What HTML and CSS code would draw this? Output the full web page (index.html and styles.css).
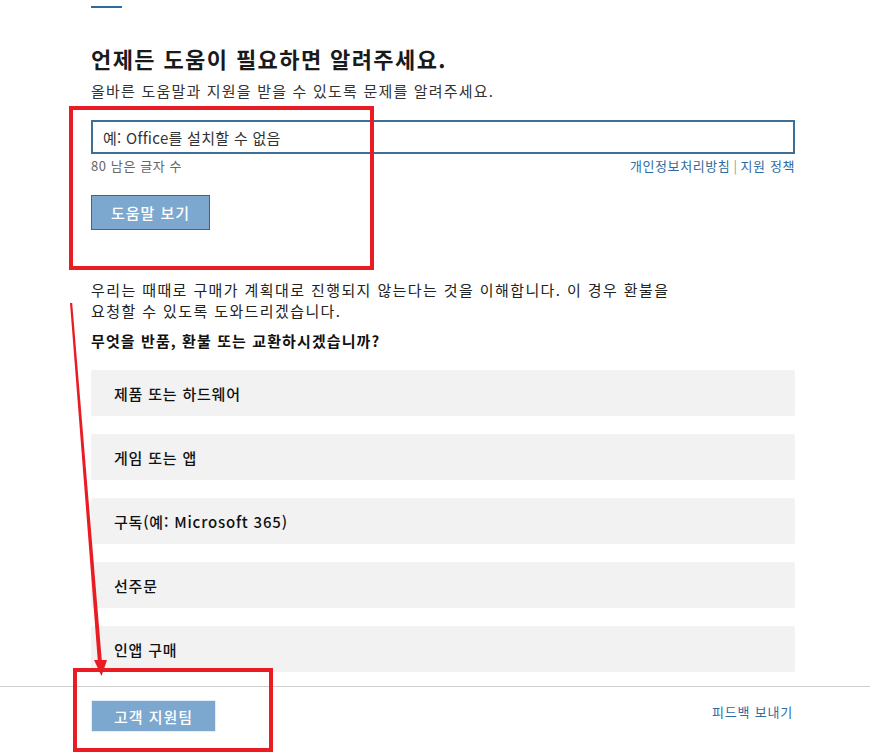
FILE: index.html
```html
<!DOCTYPE html>
<html lang="ko">
<head>
<meta charset="utf-8">
<link rel="stylesheet" href="styles.css">
</head>
<body>
<div class="page">
  <div class="content">
    <div class="accent"></div>
    <h1 class="title">언제든 도움이 필요하면 알려주세요.</h1>
    <p class="subtitle">올바른 도움말과 지원을 받을 수 있도록 문제를 알려주세요.</p>
    <div class="search">
      <input class="search-input" type="text" value="예: Office를 설치할 수 없음">
      <div class="search-meta">
        <span class="count">80 남은 글자 수</span>
        <span class="links"><a class="link">개인정보처리방침</a><span class="sep">|</span><a class="link">지원 정책</a></span>
      </div>
      <button class="btn btn-help">도움말 보기</button>
    </div>
    <p class="intro">우리는 때때로 구매가 계획대로 진행되지 않는다는 것을 이해합니다. 이 경우 환불을 요청할 수 있도록 도와드리겠습니다.</p>
    <p class="question">무엇을 반품, 환불 또는 교환하시겠습니까?</p>
    <ul class="options">
      <li class="option">제품 또는 하드웨어</li>
      <li class="option">게임 또는 앱</li>
      <li class="option">구독(예: Microsoft 365)</li>
      <li class="option">선주문</li>
      <li class="option">인앱 구매</li>
    </ul>
  </div>
  <footer class="footer">
    <button class="btn btn-support">고객 지원팀</button>
    <a class="feedback">피드백 보내기</a>
  </footer>
  <div class="mark mark-a"></div>
  <div class="mark mark-b"></div>
  <svg class="arrow" width="870" height="755" viewBox="0 0 870 755">
    <polygon points="70,297 72.2,297 102,657 98,657" fill="#e81c22"/>
    <polygon points="94,654 107,654 101.5,670" fill="#e81c22"/>
  </svg>
</div>
</body>
</html>
```
FILE: styles.css
```css
* { box-sizing: border-box; }
html, body { margin: 0; padding: 0; background: #fff; }
body {
  font-family: "Noto Sans CJK KR", "Noto Sans", sans-serif;
  color: #222;
  width: 870px;
  height: 755px;
  overflow: hidden;
}
.page {
  position: relative;
  width: 870px;
  height: 755px;
  border-bottom: 3px solid #e6d8d8;
}
.content {
  padding: 0 75px 0 91px;
}
.accent {
  width: 31px;
  height: 2px;
  background: #2f6aa0;
  margin-top: 6px;
}
.title {
  margin: 35px 0 0;
  font-size: 22px;
  font-weight: 700;
  line-height: 30px;
  letter-spacing: 1.4px;
  color: #1a1a1a;
}
.subtitle {
  margin: 8px 0 0;
  font-size: 15px;
  line-height: 20px;
  letter-spacing: 1.2px;
  color: #333;
}
.search { margin-top: 19px; }
.search-input {
  display: block;
  width: 704px;
  height: 34px;
  border: 2px solid #3d6f97;
  padding: 0 10px;
  font-family: inherit;
  font-size: 15px;
  letter-spacing: 0.3px;
  color: #333;
  outline: none;
}
.search-meta {
  display: flex;
  justify-content: space-between;
  width: 704px;
  margin-top: 3px;
  font-size: 13px;
  line-height: 18px;
  letter-spacing: 0.6px;
}
.count { color: #666; }
.link { color: #2f6aa0; }
.sep { color: #999; margin: 0 3px; }
.btn {
  font-family: inherit;
  font-weight: 500;
  color: #fff;
  background: #7ca8cf;
  cursor: pointer;
  letter-spacing: 1px;
  padding: 0;
}
.btn-help {
  display: block;
  margin-top: 20px;
  width: 119px;
  height: 35px;
  border: 1px solid #5a5f66;
  font-size: 15px;
}
.intro {
  margin: 49px 0 0;
  width: 600px;
  font-size: 15px;
  line-height: 21px;
  letter-spacing: 1.4px;
  word-break: keep-all;
  color: #222;
}
.question {
  margin: 10px 0 0;
  font-size: 15px;
  font-weight: 700;
  line-height: 20px;
  letter-spacing: 1.1px;
  color: #111;
}
.options {
  list-style: none;
  margin: 19px 0 0;
  padding: 0;
  width: 704px;
  display: flex;
  flex-direction: column;
  gap: 18px;
}
.option {
  height: 46px;
  display: flex;
  align-items: center;
  padding-left: 23px;
  background: #f2f2f2;
  border-radius: 2px;
  font-size: 15px;
  font-weight: 500;
  letter-spacing: 0.8px;
  color: #111;
}
.footer {
  margin-top: 14px;
  border-top: 1px solid #cfcfcf;
  padding: 13px 77px 0 91px;
  display: flex;
  justify-content: space-between;
  align-items: flex-start;
}
.btn-support {
  width: 125px;
  height: 32px;
  border: 1px solid #e3eef7;
  font-size: 15px;
}
.feedback {
  margin-top: 3px;
  font-size: 13px;
  line-height: 18px;
  letter-spacing: 0.8px;
  color: #2f6aa0;
}
.mark {
  position: absolute;
  border: 4px solid #e81c22;
}
.mark-a { left: 69px; top: 100px; width: 305px; height: 164px; }
.mark-b { left: 73px; top: 662px; width: 200px; height: 84px; }
.arrow { position: absolute; left: 0; top: 0; pointer-events: none; }
```
